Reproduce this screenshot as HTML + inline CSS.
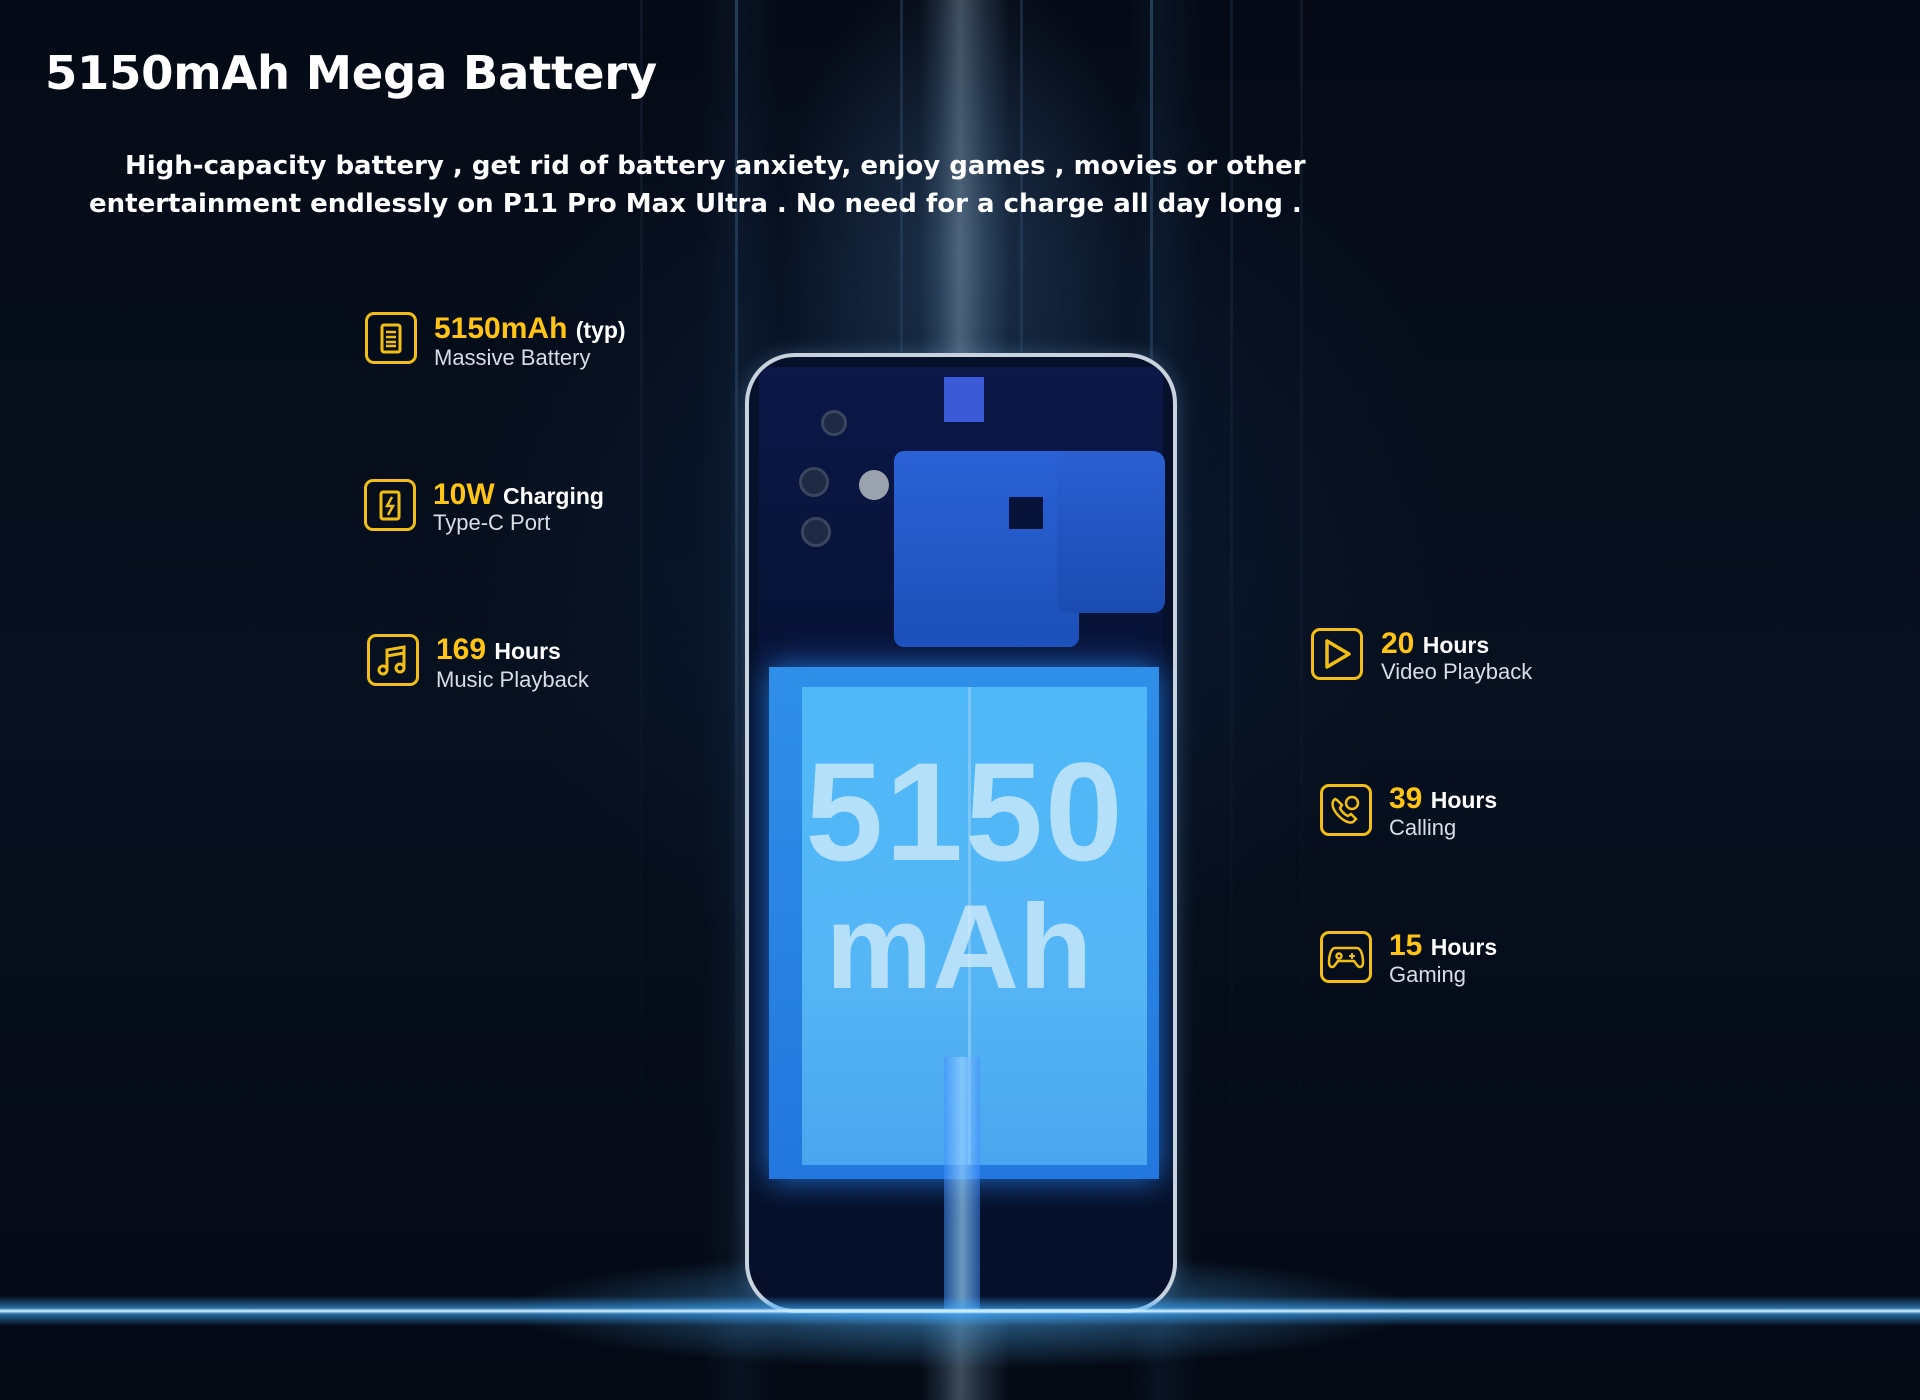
<!DOCTYPE html>
<html><head><meta charset="utf-8">
<style>
*{margin:0;padding:0;box-sizing:border-box}
body{width:1920px;height:1400px;overflow:hidden;background:#040916;font-family:"Liberation Sans",sans-serif;position:relative}
.bg{position:absolute;inset:0;
background:
linear-gradient(90deg,transparent 0,transparent 920px,rgba(120,160,190,.18) 940px,rgba(170,200,220,.35) 960px,rgba(120,160,190,.18) 985px,transparent 1010px),
linear-gradient(90deg,transparent 700px,rgba(40,80,120,.12) 740px,transparent 780px,transparent 1130px,rgba(40,80,120,.14) 1160px,transparent 1200px),
radial-gradient(ellipse 260px 420px at 960px 250px,rgba(70,110,150,.35),transparent 70%),
radial-gradient(ellipse 700px 700px at 960px 500px,rgba(20,50,90,.35),transparent 70%),
linear-gradient(180deg,#050a16 0,#07101f 50%,#040914 100%);}
.streak{position:absolute;top:0;height:1300px;width:3px;background:linear-gradient(180deg,rgba(90,140,190,.35),rgba(60,110,160,.1) 60%,transparent)}
h1{position:absolute;left:45px;top:46px;font-size:46.5px;font-weight:bold;color:#fff;font-family:"DejaVu Sans",sans-serif;letter-spacing:-.3px}
.p{position:absolute;font-size:26px;font-weight:bold;color:#fff;white-space:nowrap;font-family:"DejaVu Sans",sans-serif}
.glow{position:absolute;left:0;right:0;top:1296px;height:30px;background:linear-gradient(180deg,transparent,rgba(60,170,255,.6) 40%,#d8f4ff 50%,rgba(60,170,255,.6) 60%,transparent)}
.glow2{position:absolute;left:500px;width:920px;top:1250px;height:120px;background:radial-gradient(ellipse at center,rgba(80,180,255,.55),transparent 70%)}
.phone{position:absolute;left:745px;top:353px;width:432px;height:960px;border-radius:50px;border:4px solid #c9d3de;background:#06102a;overflow:hidden;box-shadow:0 0 18px rgba(120,170,220,.3)}
.pcb{position:absolute;left:10px;top:10px;right:10px;height:300px;background:linear-gradient(180deg,#0b1848,#081235);}
.bat{position:absolute;left:20px;top:310px;width:390px;height:512px;background:linear-gradient(180deg,#2f8fe8,#2277de);box-shadow:0 0 30px rgba(40,140,255,.8)}
.bati{position:absolute;left:53px;top:330px;width:345px;height:478px;background:linear-gradient(180deg,#4fb8f8,#55b6f5 60%,#4aa6ee)}
.big{position:absolute;color:#d7eefc;font-weight:bold;font-family:"Liberation Sans",sans-serif;text-align:center;width:432px;left:0;opacity:.75}
.ic{position:absolute;width:52px;height:52px;border:3px solid #f2be14;border-radius:9px}
.t1{position:absolute;white-space:nowrap;font-size:30px;font-weight:bold;color:#ffc414}
.t1 span{font-size:23px;color:#fff}
.t2{position:absolute;white-space:nowrap;font-size:22px;color:#d8dde6}
</style></head><body>
<div class="bg"></div>
<div class="streak" style="left:735px"></div>
<div class="streak" style="left:900px;opacity:.6"></div>
<div class="streak" style="left:1020px;opacity:.6"></div>
<div class="streak" style="left:1150px"></div>
<div class="streak" style="left:1230px;opacity:.4"></div>
<div class="streak" style="left:1300px;opacity:.3"></div>
<div class="streak" style="left:640px;opacity:.3"></div>

<h1>5150mAh Mega Battery</h1>
<div class="p" style="left:125px;top:151px">High-capacity battery , get rid of battery anxiety, enjoy games , movies or other</div>
<div class="p" style="left:89px;top:189px">entertainment endlessly on P11 Pro Max Ultra . No need for a charge all day long .</div>

<div class="glow2"></div>
<div class="phone">
  <div class="pcb"></div>
  <div style="position:absolute;left:145px;top:94px;width:185px;height:196px;background:linear-gradient(180deg,#2a62d6,#1c4fb8);border-radius:10px"></div>
  <div style="position:absolute;left:308px;top:94px;width:108px;height:162px;background:linear-gradient(180deg,#2a5fd2,#1b4cb2);border-radius:12px"></div>
  <div style="position:absolute;left:260px;top:140px;width:34px;height:32px;background:#08133a"></div>
  <div style="position:absolute;left:195px;top:20px;width:40px;height:45px;background:#3a5ad8"></div>
  <div style="position:absolute;left:72px;top:53px;width:26px;height:26px;border-radius:50%;background:#1e2a44;border:3px solid #3a4560"></div>
  <div style="position:absolute;left:50px;top:110px;width:30px;height:30px;border-radius:50%;background:#1e2a44;border:3px solid #3a4560"></div>
  <div style="position:absolute;left:52px;top:160px;width:30px;height:30px;border-radius:50%;background:#1e2a44;border:3px solid #3a4560"></div>
  <div style="position:absolute;left:110px;top:113px;width:30px;height:30px;border-radius:50%;background:#9aa3ad"></div>
  <div class="bat"></div>
  <div class="bati"></div>
  <div style="position:absolute;left:219px;top:330px;width:3px;height:478px;background:#7fc6f5"></div>
  <div class="big" style="top:385px;font-size:140px;letter-spacing:2px;line-height:140px">5150</div>
  <div class="big" style="top:530px;font-size:120px;line-height:120px;left:-6px">mAh</div>
  <div style="position:absolute;left:195px;top:700px;width:36px;height:260px;background:linear-gradient(90deg,rgba(60,140,255,.5),rgba(150,210,255,.7),rgba(60,140,255,.5))"></div>
</div>
<div class="glow"></div>

<div class="ic" style="left:365px;top:312px"><svg width="46" height="46" viewBox="0 0 46 46" fill="none" stroke="#f2be14" stroke-width="3"><rect x="14" y="10" width="18" height="27" rx="2"/><path d="M18 17h10M18 22h10M18 27h10M18 31h10" stroke-width="2.5"/></svg></div>
<div class="t1" style="left:434px;top:312px">5150mAh <span>(typ)</span></div>
<div class="t2" style="left:434px;top:345px">Massive Battery</div>

<div class="ic" style="left:364px;top:479px"><svg width="46" height="46" viewBox="0 0 46 46" fill="none" stroke="#f2be14" stroke-width="3"><rect x="14" y="10" width="18" height="27" rx="2"/><path d="M25 15l-5 9h6l-5 9" stroke-width="2.5"/></svg></div>
<div class="t1" style="left:433px;top:478px">10W <span>Charging</span></div>
<div class="t2" style="left:433px;top:510px">Type-C Port</div>

<div class="ic" style="left:367px;top:634px"><svg width="46" height="46" viewBox="0 0 46 46" fill="none" stroke="#f2be14" stroke-width="3"><circle cx="13" cy="33" r="4"/><circle cx="30" cy="31" r="4"/><path d="M17 33V13l17-3v21M17 19l17-3"/></svg></div>
<div class="t1" style="left:436px;top:633px">169 <span>Hours</span></div>
<div class="t2" style="left:436px;top:667px">Music Playback</div>

<div class="ic" style="left:1311px;top:628px"><svg width="46" height="46" viewBox="0 0 46 46" fill="none" stroke="#f2be14" stroke-width="3.5" stroke-linejoin="round"><path d="M13 10v26l22-13z"/></svg></div>
<div class="t1" style="left:1381px;top:627px">20 <span>Hours</span></div>
<div class="t2" style="left:1381px;top:659px">Video Playback</div>

<div class="ic" style="left:1320px;top:784px"><svg width="46" height="46" viewBox="0 0 46 46" fill="none" stroke="#f2be14" stroke-width="2.5"><path d="M12 12c-4 3-3 9 2 15s12 10 16 8l3-3-5-5-3 2c-3-1-7-5-8-8l2-3-5-5z"/><circle cx="29" cy="16" r="6"/></svg></div>
<div class="t1" style="left:1389px;top:782px">39 <span>Hours</span></div>
<div class="t2" style="left:1389px;top:815px">Calling</div>

<div class="ic" style="left:1320px;top:931px"><svg width="46" height="46" viewBox="0 0 46 46" fill="none" stroke="#f2be14" stroke-width="2.5"><path d="M12 14h22c4 0 6 8 6 14s-4 6-6 3l-3-4H15l-3 4c-2 3-6 3-6-3s2-14 6-14z"/><circle cx="16" cy="22" r="2.5"/><path d="M29 19v6M26 22h6" stroke-width="2"/></svg></div>
<div class="t1" style="left:1389px;top:929px">15 <span>Hours</span></div>
<div class="t2" style="left:1389px;top:962px">Gaming</div>
</body></html>
